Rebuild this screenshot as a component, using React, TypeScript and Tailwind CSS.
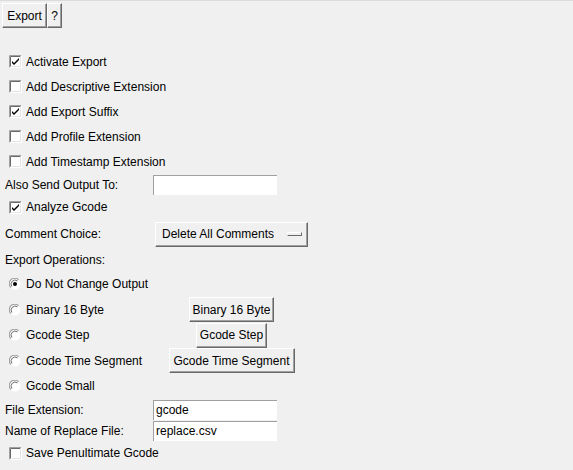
import React from 'react';

const font = { fontFamily: '"Liberation Sans", Arial, sans-serif' };

function Check({ on }: { on: boolean }) {
  return (
    <svg width="13" height="13" viewBox="0 0 13 13" className="shrink-0">
      <rect x="0" y="0" width="13" height="13" fill="#ffffff" />
      <path d="M0.5 12.5 V0.5 H12.5" stroke="#a0a0a0" fill="none" />
      <path d="M1.5 11.5 V1.5 H11.5" stroke="#696969" fill="none" />
      <path d="M1.5 12.5 H12.5 V0.5" stroke="#ffffff" fill="none" />
      <path d="M2.5 11.5 H11.5 V1.5" stroke="#e3e3e3" fill="none" />
      {on && <path d="M3 6 L5 8 L10 3 V5 L5 10 L3 8 Z" fill="#000000" />}
    </svg>
  );
}

function Radio({ on }: { on: boolean }) {
  return (
    <svg width="12" height="12" viewBox="0 0 12 12" className="shrink-0">
      <circle cx="6" cy="6" r="5.5" fill="#ffffff" />
      <path d="M1.8 9.5 A5.2 5.2 0 0 1 9.5 1.8" stroke="#a0a0a0" strokeWidth="1.2" fill="none" />
      <path d="M2.9 8.5 A4 4 0 0 1 8.5 2.9" stroke="#696969" strokeWidth="1" fill="none" />
      {on && <circle cx="6" cy="6" r="2" fill="#000000" />}
    </svg>
  );
}

function Btn({ children, className = '' }: { children: React.ReactNode; className?: string }) {
  return (
    <div className={`h-[25px] flex items-center justify-center whitespace-nowrap bg-[#f0f0f0] border border-t-white border-l-white border-r-[#696969] border-b-[#696969] shadow-[inset_-1px_-1px_0_#a0a0a0] text-[12px] text-black ${className}`}>
      {children}
    </div>
  );
}

function CheckRow({ label, on, h }: { label: string; on: boolean; h: string }) {
  return (
    <div className={`${h} flex items-center pl-[9px] gap-[4px]`}>
      <Check on={on} />
      <span className="whitespace-nowrap">{label}</span>
    </div>
  );
}

function RadioRow({ label, on, h, button, btnW }: { label: string; on: boolean; h: string; button?: string; btnW?: string }) {
  return (
    <div className={`${h} flex items-center`}>
      <div className="w-[155px] flex items-center pl-[9px] gap-[5px]">
        <Radio on={on} />
        <span className="whitespace-nowrap">{label}</span>
      </div>
      <div className="w-[153px] flex justify-center">
        {button && <Btn className={btnW}>{button}</Btn>}
      </div>
    </div>
  );
}

function Field({ label, value, h }: { label: string; value: string; h: string }) {
  return (
    <div className={`${h} flex items-center`}>
      <span className="w-[153px] pl-[5px] whitespace-nowrap">{label}</span>
      <div className="w-[124px] h-[20px] bg-white border-t border-l border-[#a0a0a0] border-r-white border-b-white flex items-center pl-[2px]">
        {value}
      </div>
    </div>
  );
}

export default function App() {
  return (
    <div style={font} className="w-[573px] h-[470px] bg-[#f0f0f0] border-t border-[#dcdcdc] text-[12px] text-black overflow-hidden">
      <div className="h-[48px] flex items-start pt-[2px] pl-[2px]">
        <Btn className="w-[45px] h-[24px]">Export</Btn>
        <Btn className="w-[15px] h-[24px]">?</Btn>
      </div>
      <CheckRow label="Activate Export" on h="h-[25px]" />
      <CheckRow label="Add Descriptive Extension" on={false} h="h-[25px]" />
      <CheckRow label="Add Export Suffix" on h="h-[25px]" />
      <CheckRow label="Add Profile Extension" on={false} h="h-[25px]" />
      <CheckRow label="Add Timestamp Extension" on={false} h="h-[25px]" />
      <Field label="Also Send Output To:" value="" h="h-[21px]" />
      <CheckRow label="Analyze Gcode" on h="h-[24px]" />
      <div className="h-[30px] flex items-center">
        <span className="w-[155px] pl-[5px]">Comment Choice:</span>
        <Btn className="w-[153px] justify-start pl-[6px] gap-[13px]">
          <span>Delete All Comments</span>
          <span className="w-[15px] h-[4px] bg-[#f0f0f0] border border-t-white border-l-white border-r-[#696969] border-b-[#696969]" />
        </Btn>
      </div>
      <div className="h-[22px] flex items-center pl-[5px]">Export Operations:</div>
      <RadioRow label="Do Not Change Output" on h="h-[26px]" />
      <RadioRow label="Binary 16 Byte" on={false} h="h-[25px]" button="Binary 16 Byte" btnW="w-[85px]" />
      <RadioRow label="Gcode Step" on={false} h="h-[26px]" button="Gcode Step" btnW="w-[71px]" />
      <RadioRow label="Gcode Time Segment" on={false} h="h-[25px]" button="Gcode Time Segment" btnW="w-[126px]" />
      <RadioRow label="Gcode Small" on={false} h="h-[26px]" />
      <Field label="File Extension:" value="gcode" h="h-[21px]" />
      <Field label="Name of Replace File:" value="replace.csv" h="h-[21px]" />
      <CheckRow label="Save Penultimate Gcode" on={false} h="h-[24px]" />
    </div>
  );
}
